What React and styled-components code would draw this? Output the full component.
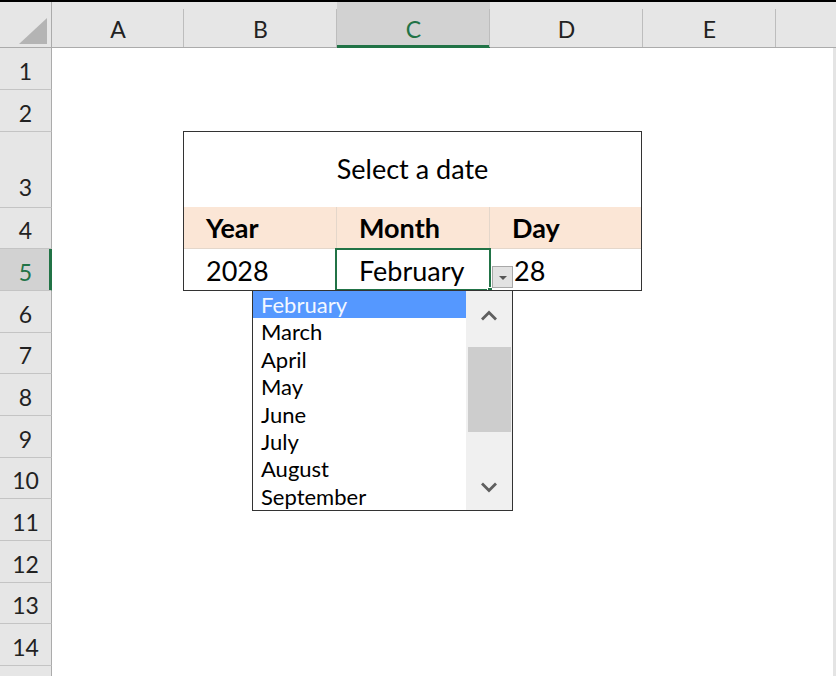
import React from 'react';
import styled, { createGlobalStyle, css } from 'styled-components';

const GREEN = '#217346';

const GlobalStyle = createGlobalStyle`
    html, body {
        margin: 0;
        padding: 0;
        background: #000;
    }
    body {
        font-family: Lato, 'Liberation Sans', sans-serif;
        overflow: hidden;
    }
    * {
        box-sizing: border-box;
    }
`;

const columns = ['A', 'B', 'C', 'D', 'E', ''];
// last row is only partly in view, so it gets no label
const rowHeights = [42, 42, 76, 41, 42, 42, 41, 42, 42, 41, 42, 42, 41, 42, 42];
const months = ['February', 'March', 'April', 'May', 'June', 'July', 'August', 'September'];

const App = () => {
    return (
        <>
            <GlobalStyle />
            <Page>
                <Sheet>
                    <Corner>
                        <Triangle />
                    </Corner>
                    {columns.map(col => (
                        <ColHead key={col || 'rest'} $active={col === 'C'} $last={col === ''}>
                            {col}
                        </ColHead>
                    ))}
                    {rowHeights.map((h, i) => (
                        <RowHead key={i} $row={i + 2} $active={i + 1 === 5} $tall={h > 60}>
                            {i < rowHeights.length - 1 ? i + 1 : ''}
                        </RowHead>
                    ))}

                    <DateTable>
                        <TitleCell>Select a date</TitleCell>
                        <HeadCell $divider>Year</HeadCell>
                        <HeadCell $divider>Month</HeadCell>
                        <HeadCell>Day</HeadCell>
                        <ValueCell>2028</ValueCell>
                        <ValueCell>
                            February
                            <Selection>
                                <FillHandle />
                            </Selection>
                            <DropButton>
                                <Caret />
                            </DropButton>
                            <DropList>
                                <Items>
                                    {months.map((m, i) => (
                                        <Item key={m} $active={i === 0}>
                                            {m}
                                        </Item>
                                    ))}
                                </Items>
                                <ScrollBar>
                                    <Arrow>
                                        <svg width="18" height="11" viewBox="0 0 18 11">
                                            <polyline points="2,9.5 9,2.5 16,9.5" fill="none" stroke="#5f5f5f" strokeWidth="2.8" />
                                        </svg>
                                    </Arrow>
                                    <Track>
                                        <Thumb />
                                    </Track>
                                    <Arrow $down>
                                        <svg width="18" height="11" viewBox="0 0 18 11">
                                            <polyline points="2,1.5 9,8.5 16,1.5" fill="none" stroke="#5f5f5f" strokeWidth="2.8" />
                                        </svg>
                                    </Arrow>
                                </ScrollBar>
                            </DropList>
                        </ValueCell>
                        <ValueCell $day>28</ValueCell>
                    </DateTable>
                </Sheet>
            </Page>
        </>
    );
};

const Page = styled.div`
    width: 836px;
    height: 676px;
    padding-top: 2px;
    background: #000;
    overflow: hidden;
`;

const Sheet = styled.div`
    display: grid;
    grid-template-columns: 52px 132px 153px 153px 153px 133px 1fr;
    grid-template-rows: 46px ${rowHeights.map(h => `${h}px`).join(' ')};
    height: 674px;
    background: #fff;
    box-shadow: inset -3px 0 0 #e4e4e4;
    color: #222;
    overflow: hidden;
`;

const Corner = styled.div`
    display: flex;
    justify-content: flex-end;
    align-items: flex-end;
    padding: 0 4px 3px 0;
    background: #e6e6e6;
    border-right: 1px solid #ababab;
    border-bottom: 1px solid #ababab;
`;

const Triangle = styled.div`
    width: 28px;
    height: 26px;
    background: #b4b4b4;
    clip-path: polygon(100% 0, 100% 100%, 0 100%);
`;

const ColHead = styled.div`
    position: relative;
    display: flex;
    justify-content: center;
    align-items: flex-end;
    padding-bottom: 6px;
    background: #e6e6e6;
    border-bottom: 1px solid #ababab;
    font-size: 23px;
    line-height: 1;
    &::after {
        content: '';
        position: absolute;
        top: 7px;
        right: 0;
        bottom: 0;
        width: 1px;
        background: ${p => (p.$last ? 'transparent' : '#bdbdbd')};
    }
    ${p =>
        p.$active &&
        css`
            background: #d2d2d2;
            color: ${GREEN};
            border-bottom-color: ${GREEN};
            box-shadow: inset 0 -2px 0 ${GREEN};
        `}
`;

const RowHead = styled.div`
    grid-column: 1;
    grid-row: ${p => p.$row};
    display: flex;
    justify-content: center;
    align-items: flex-end;
    padding-bottom: ${p => (p.$tall ? '8px' : '6px')};
    background: #e6e6e6;
    border-right: 1px solid #ababab;
    border-bottom: 1px solid #c4c4c4;
    font-size: 23px;
    line-height: 1;
    ${p =>
        p.$active &&
        css`
            background: #d2d2d2;
            color: ${GREEN};
            border-right-color: ${GREEN};
            box-shadow: inset -2px 0 0 ${GREEN};
        `}
`;

const DateTable = styled.div`
    grid-column: 3 / 6;
    grid-row: 4 / 7;
    margin: -1px 1px 0 -1px;
    display: grid;
    grid-template-columns: 153px 153px 1fr;
    grid-template-rows: 75px 42px 1fr;
    border: 1px solid #333;
    background: #fff;
    color: #000;
    font-size: 27px;
    line-height: 1;
    position: relative;
    z-index: 1;
`;

const TitleCell = styled.div`
    grid-column: 1 / -1;
    display: flex;
    justify-content: center;
    align-items: center;
    padding-bottom: 2px;
`;

const HeadCell = styled.div`
    display: flex;
    align-items: flex-end;
    padding: 0 0 7px 22px;
    background: #fbe6d6;
    border-bottom: 1px solid #e4d7cb;
    border-right: ${p => (p.$divider ? '1px solid #e4d7cb' : '0')};
    font-weight: 700;
`;

const ValueCell = styled.div`
    position: relative;
    display: flex;
    align-items: flex-end;
    padding: 0 0 6px ${p => (p.$day ? '24px' : '22px')};
`;

const Selection = styled.div`
    position: absolute;
    top: -1px;
    left: -2px;
    right: -1px;
    bottom: -1px;
    border: 2px solid ${GREEN};
    pointer-events: none;
`;

const FillHandle = styled.div`
    position: absolute;
    right: -4px;
    bottom: -4px;
    width: 6px;
    height: 6px;
    background: ${GREEN};
    border: 1px solid #fff;
`;

const DropButton = styled.div`
    position: absolute;
    left: 155px;
    top: 17px;
    width: 21px;
    height: 22px;
    display: flex;
    justify-content: center;
    align-items: center;
    background: #e2e2e2;
    border: 1px solid #a8a8a8;
    z-index: 2;
`;

const Caret = styled.div`
    width: 0;
    height: 0;
    margin-top: 2px;
    border-left: 4px solid transparent;
    border-right: 4px solid transparent;
    border-top: 4px solid #555;
`;

const DropList = styled.div`
    position: absolute;
    left: -85px;
    top: 41px;
    width: 261px;
    height: 221px;
    display: grid;
    grid-template-columns: 1fr 46px;
    background: #fff;
    border: 1px solid #333;
    z-index: 3;
`;

const Items = styled.div`
    overflow: hidden;
`;

const Item = styled.div`
    height: 27.4px;
    padding-left: 8px;
    font-size: 22px;
    line-height: 27.4px;
    color: #000;
    ${p =>
        p.$active &&
        css`
            background: #5598ff;
            color: #f2f7ff;
        `}
`;

const ScrollBar = styled.div`
    display: flex;
    flex-direction: column;
    background: #f0f0f0;
`;

const Arrow = styled.div`
    height: ${p => (p.$down ? '46px' : '48px')};
    display: flex;
    justify-content: center;
    align-items: center;
`;

const Track = styled.div`
    flex: 1;
    padding: 8px 1px 0 2px;
`;

const Thumb = styled.div`
    height: 85px;
    background: #cdcdcd;
`;

export default App;
